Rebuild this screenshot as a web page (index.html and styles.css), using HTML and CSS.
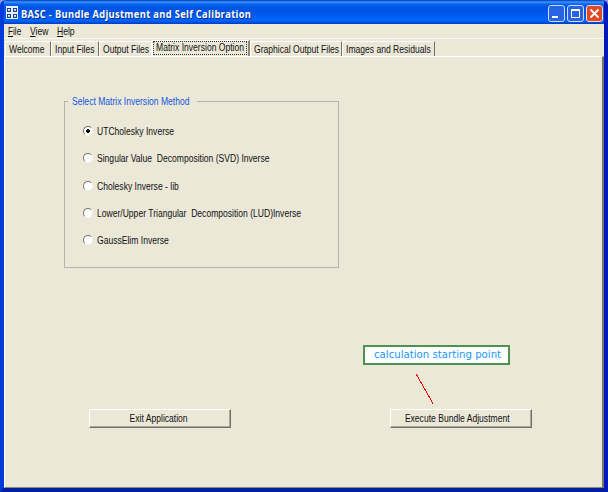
FILE: index.html
```html
<!DOCTYPE html>
<html lang="en">
<head>
<meta charset="utf-8">
<title>BASC - Bundle Adjustment and Self Calibration</title>
<link rel="stylesheet" href="styles.css">
</head>
<body>
<div class="window">
  <header class="titlebar">
    <svg class="appicon" width="12" height="13" viewBox="0 0 12 13" shape-rendering="crispEdges"><rect width="12" height="13" fill="#e6eeff"/><path d="M1 2h4v1H1zM7 2h4v1H7zM1 5h4v1H1zM7 5h4v1H7zM1 8h4v1H1zM7 8h4v1H7zM1 11h4v1H1zM7 11h4v1H7zM1 2h1v4H1zM4 2h1v4H4zM7 2h1v4H7zM10 2h1v4h-1zM1 8h1v4H1zM4 8h1v4H4zM7 8h1v4H7zM10 8h1v4h-1z" fill="#173f94"/><path d="M2 4h2v1H2zM8 4h2v1H8zM2 10h2v1H2zM8 10h2v1H8z" fill="#d8c78e"/></svg>
    <h1 class="title"><span>BASC - Bundle Adjustment and Self Calibration</span></h1>
    <div class="controls">
      <svg width="17" height="17" viewBox="0 0 17 17"><rect class="blue" x=".5" y=".5" width="16" height="16" rx="2.5"/><path d="M4 12h6" stroke="#fff" stroke-width="2"/></svg>
      <svg width="17" height="17" viewBox="0 0 17 17"><rect class="blue" x=".5" y=".5" width="16" height="16" rx="2.5"/><path d="M4.5 4v8.5h8V4" fill="none" stroke="#fff"/><path d="M4 5h9" stroke="#fff" stroke-width="2"/></svg>
      <svg width="17" height="17" viewBox="0 0 17 17"><rect class="red" x=".5" y=".5" width="16" height="16" rx="2.5"/><path d="M4.5 4.5l8 8M12.5 4.5l-8 8" stroke="#fff" stroke-width="1.8"/></svg>
    </div>
  </header>
  <nav class="menu"><div class="file"><span><u>F</u>ile</span></div><div class="view"><span><u>V</u>iew</span></div><div><span><u>H</u>elp</span></div></nav>
  <div class="tabs">
    <div class="tab t1"><span>Welcome</span></div>
    <div class="tab t2"><span>Input Files</span></div>
    <div class="tab t3"><span>Output Files</span></div>
    <div class="tab active"><span>Matrix Inversion Option</span></div>
    <div class="tab t5"><span>Graphical Output Files</span></div>
    <div class="tab t6"><span>Images and Residuals</span></div>
  </div>
  <main class="page">
    <fieldset class="group">
      <legend><span>Select Matrix Inversion Method</span></legend>
      <div class="options">
        <div class="option"><i class="radio on"></i><span>UTCholesky Inverse</span></div>
        <div class="option"><i class="radio"></i><span>Singular Value&nbsp; Decomposition (SVD) Inverse</span></div>
        <div class="option"><i class="radio"></i><span>Cholesky Inverse - lib</span></div>
        <div class="option"><i class="radio"></i><span>Lower/Upper Triangular&nbsp; Decomposition (LUD)Inverse</span></div>
        <div class="option"><i class="radio"></i><span>GaussElim Inverse</span></div>
      </div>
    </fieldset>
    <div class="note"><span>calculation starting point</span></div>
    <svg class="pointer" width="19" height="32" viewBox="0 0 19 32" shape-rendering="crispEdges"><path d="M.5 .5L17.5 30.5" stroke="#f00000"/></svg>
    <div class="actions">
      <div class="button"><span>Exit Application</span></div>
      <div class="button execute"><span>Execute Bundle Adjustment</span></div>
    </div>
  </main>
</div>
</body>
</html>
```
FILE: styles.css
```css
* { box-sizing: border-box; }
body { margin: 0; background: #7d9ce4; font: 10.5px/14px "Liberation Sans", sans-serif; color: #111; }
span { display: inline-block; white-space: pre; transform: scaleX(.815); transform-origin: 0 50%; }
.window { width: 608px; height: 492px; overflow: hidden; display: flex; flex-direction: column; background: #ebe8d8; border: solid #003bda; border-width: 0 4px 4px; border-radius: 6px 6px 0 0; border-bottom-color: #001ea0; border-right-color: #0019b8; }
.titlebar { height: 24px; flex: none; margin: 0 -4px; padding: 0 5px 0 6px; display: flex; align-items: center; background: linear-gradient(#0636b5 0, #3995ff 2px, #0867ef 4px, #0054e3 7px, #0056e8 14px, #0066ff 19px, #0060f8 21px, #003bc0 24px); }
.appicon { flex: none; margin-top: 1px; }
.title { margin: 3px 0 0 3px; flex: 1; font: bold 11px/14px "Open Sans", sans-serif; color: #fff; text-shadow: 1px 1px #0a2b86; }
.title span { transform: scaleX(.85); letter-spacing: .37px; }
.controls { display: flex; gap: 2px; margin-top: 3px; }
.controls svg { display: block; }
.blue { fill: #2863e3; stroke: #c9dcff; }
.red { fill: #df4a25; stroke: #f7d6cf; }
.menu { height: 15px; flex: none; padding-left: 4px; display: flex; border-bottom: 1px solid #faf9f3; }
.file { width: 22px; }
.view { width: 27px; }
.file span { transform: scaleX(.78); }
.tabs { height: 17px; flex: none; display: flex; align-items: flex-end; padding-left: 1px; }
.tab { flex: none; height: 15px; padding: 1px 0 0 4px; border-top: 1px solid #fff; border-right: 1px solid #716f64; box-shadow: inset 1px 0 #fff; line-height: 13px; }
.t1 { width: 46px; }
.t2 { width: 48px; }
.t3 { width: 53px; border-right-color: #fff; }
.t5 { width: 92px; }
.t6 { width: 93px; }
.active { width: 98px; height: 16px; padding: 0 0 0 4px; border-right: 2px solid #8a887b; position: relative; }
.active::after { content: ""; position: absolute; inset: 0 1px 1px 1px; border: 1px dotted #333; }
.page { flex: 1; display: flex; flex-direction: column; border: solid; border-width: 1px 2px 1px 1px; border-color: #fff #77756a #8a887b #fff; }
.group { margin: 37px 0 0 59px; padding: 0; min-width: 0; width: 275px; height: 174px; border: 1px solid #b3b3a7; }
legend { width: 129px; margin-left: 3px; padding: 0 0 0 4px; color: #1556dd; height: 14px; }
.options { padding: 16px 0 0 18px; display: flex; flex-direction: column; gap: 13.3px; }
.option { display: flex; align-items: center; gap: 4px; height: 14px; }
.radio { flex: none; width: 10px; height: 10px; border-radius: 50%; background: #fff; border: 1px solid; border-color: #77756a #f4f2e7 #f4f2e7 #77756a; }
.on { background: radial-gradient(circle, #000 1.6px, #fff 2.2px); }
.note { margin: 77px 0 0 358px; width: 147px; height: 20px; border: 2px solid #4f9150; background: #fff; color: #1a96f5; padding-left: 9px; font: 11px/16px "DejaVu Sans", sans-serif; }
.note span { transform: scaleX(.925); }
.pointer { margin: 9px 0 0 411px; display: block; }
.actions { display: flex; gap: 159px; margin: 3px 0 0 84px; }
.button { width: 142px; height: 19px; text-align: center; line-height: 16px; border: 1px solid; border-color: #fff #716f64 #716f64 #fff; box-shadow: inset -1px -1px #aca899; }
.button span { transform-origin: 50% 50%; margin-left: -3px; }
.execute span { margin: 0 2px 0 -6px; }
```
